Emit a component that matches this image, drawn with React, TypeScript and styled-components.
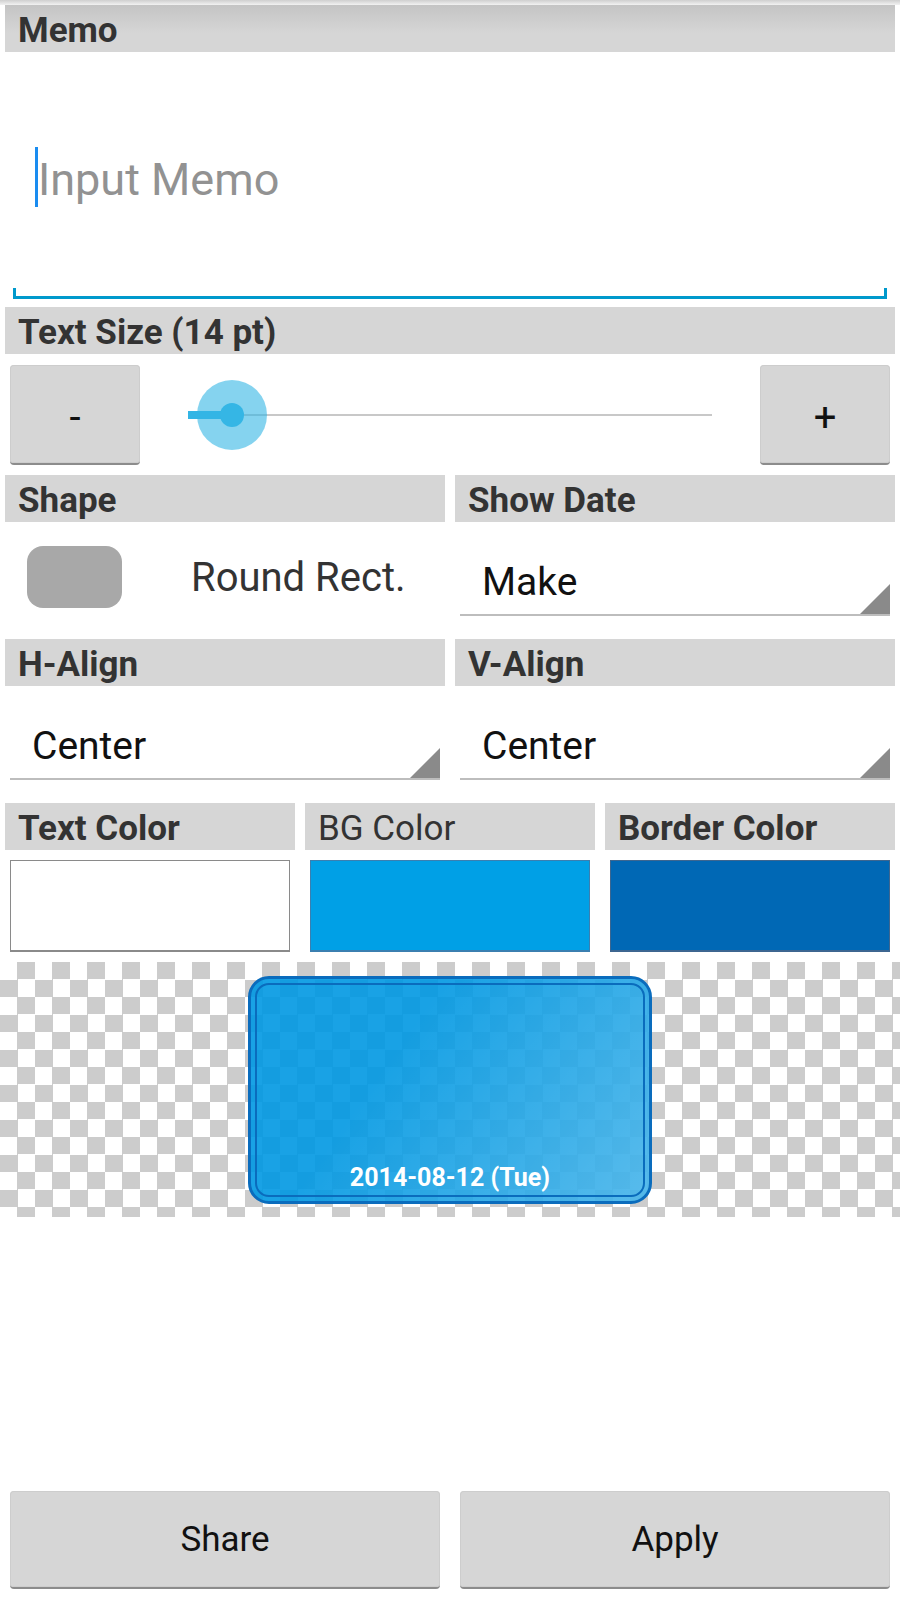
import React from "react";
import styled, { createGlobalStyle } from "styled-components";

const GlobalStyle = createGlobalStyle`
  html, body {
    margin: 0;
    padding: 0;
    background: #fff;
  }
  body {
    font-family: Roboto, "Noto Sans", "Liberation Sans", sans-serif;
  }
  * {
    box-sizing: border-box;
  }
`;

// Layout
const Page = styled.div`
  width: 900px;
  height: 1600px;
  display: flex;
  flex-direction: column;
  background: #fff;
  overflow: hidden;
`;

const TopShade = styled.div`
  height: 5px;
  background: linear-gradient(#cfcfcf, #f2f2f2);
`;

const SectionHeader = styled.div<{ light?: boolean; shaded?: boolean }>`
  height: 47px;
  padding: 9px 0 0 13px;
  background: ${({ shaded }) =>
    shaded ? "linear-gradient(#c4c4c4, #d6d6d6 60%)" : "#d6d6d6"};
  color: #333;
  font-size: 35px;
  line-height: 34px;
  font-weight: ${({ light }) => (light ? 400 : 700)};
  white-space: nowrap;
  overflow: hidden;
`;

const FullHeader = styled(SectionHeader)`
  margin: 0 5px;
`;

// Memo field
const MemoField = styled.div`
  margin: 0 13px 8px;
`;

const MemoText = styled.div`
  height: 236px;
  padding: 20px 0 0 22px;
  display: flex;
  align-items: center;
`;

const Caret = styled.span`
  width: 3px;
  height: 60px;
  margin-top: -6px;
  background: #1a8cf0;
`;

const Placeholder = styled.span`
  font-size: 45px;
  color: #929292;
  line-height: 60px;
`;

const Underline = styled.div`
  height: 11px;
  border: 3px solid #0099cc;
  border-top: none;
`;

// Text size row
const SizeRow = styled.div`
  display: flex;
  align-items: center;
  padding: 0 10px;
  margin: 11px 0 10px;
  height: 100px;
`;

const HoloButton = styled.button<{ w?: number; big?: boolean }>`
  width: ${({ w }) => (w ? `${w}px` : "auto")};
  flex: ${({ w }) => (w ? "none" : "1")};
  height: 100%;
  border: none;
  border-bottom: 2px solid #8c8c8c;
  border-radius: 4px;
  background: #d6d6d6;
  box-shadow: 0 0 0 1px #cdcdcd inset;
  color: #111;
  font-family: inherit;
  font-size: ${({ big }) => (big ? "40px" : "35px")};
  padding: ${({ big }) => (big ? "6px 0 0" : "0")};
  cursor: pointer;
`;

const SliderBox = styled.div`
  flex: 1;
  margin: 0 48px;
  height: 100%;
  position: relative;
  display: flex;
  align-items: center;
`;

const Track = styled.div`
  flex: 1;
  height: 2px;
  background: #c8c8c8;
  position: relative;
`;

const TrackFill = styled.div`
  position: absolute;
  left: 0;
  top: -3px;
  height: 8px;
  background: #33b5e5;
`;

const Thumb = styled.div`
  position: absolute;
  top: 50%;
  width: 70px;
  height: 70px;
  margin: -35px 0 0 -35px;
  border-radius: 50%;
  background: rgba(51, 181, 229, 0.6);
  display: flex;
  align-items: center;
  justify-content: center;

  &::after {
    content: "";
    width: 24px;
    height: 24px;
    border-radius: 50%;
    background: #35b6e5;
  }
`;

// Two / three column grids
const Columns = styled.div<{ count: number }>`
  display: grid;
  grid-template-columns: repeat(${({ count }) => count}, 1fr);
  column-gap: 10px;
  padding: 0 5px;
`;

const Cell = styled.div`
  display: flex;
  flex-direction: column;
`;

const ShapeBody = styled.div`
  height: 94px;
  margin-bottom: 23px;
  padding: 16px 0 0 22px;
  display: flex;
  align-items: center;
  gap: 69px;
`;

const ShapeSwatch = styled.div`
  width: 95px;
  height: 62px;
  border-radius: 16px;
  background: #a8a8a8;
`;

const ShapeLabel = styled.span`
  font-size: 40px;
  color: #333;
`;

const Spinner = styled.div`
  height: 94px;
  margin: 0 5px 23px;
  border-bottom: 2px solid #bdbdbd;
  display: flex;
`;

const SpinnerText = styled.span`
  flex: 1;
  padding: 37px 0 0 22px;
  font-size: 39px;
  line-height: 46px;
  color: #111;
`;

const SpinnerArrow = styled.div`
  align-self: flex-end;
  width: 0;
  height: 0;
  border-left: 30px solid transparent;
  border-bottom: 30px solid #8a8a8a;
`;

const ColorSwatch = styled.div<{ color: string; edge: string }>`
  height: 92px;
  margin: 10px 5px 0;
  background: ${({ color }) => color};
  border: 1px solid ${({ edge }) => edge};
  border-bottom-width: 2px;
`;

// Preview
const Checker = styled.div`
  margin-top: 10px;
  height: 255px;
  padding-top: 14px;
  display: flex;
  justify-content: center;
  align-items: flex-start;
  background-color: #fff;
  background-image: conic-gradient(#cccccc 25%, #ffffff 0 50%, #cccccc 0 75%, #ffffff 0);
  background-size: 35px 35px;
`;

const Memo = styled.div`
  width: 404px;
  height: 228px;
  padding: 4px;
  border: 3px solid #0a6cbd;
  border-radius: 21px;
  background: linear-gradient(
      125deg,
      rgba(255, 255, 255, 0) 35%,
      rgba(255, 255, 255, 0.28) 100%
    ),
    rgba(0, 152, 226, 0.9);
`;

const MemoInner = styled.div`
  height: 100%;
  border: 2px solid #0a6cbd;
  border-radius: 14px;
  display: flex;
  flex-direction: column;
  justify-content: flex-end;
  align-items: center;
  padding-bottom: 3px;
`;

const DateText = styled.span`
  color: #fff;
  font-size: 25px;
  font-weight: 700;
`;

// Footer
const Footer = styled.div`
  margin-top: auto;
  display: flex;
  gap: 20px;
  padding: 0 10px 11px;
  height: 109px;
`;

export default function App() {
  const sizePercent = 8.4;

  return (
    <>
      <GlobalStyle />
      <Page>
        <TopShade />
        <FullHeader shaded>Memo</FullHeader>
        <MemoField>
          <MemoText>
            <Caret />
            <Placeholder>Input Memo</Placeholder>
          </MemoText>
          <Underline />
        </MemoField>

        <FullHeader>Text Size (14 pt)</FullHeader>
        <SizeRow>
          <HoloButton w={130} big>-</HoloButton>
          <SliderBox>
            <Track>
              <TrackFill style={{ width: `${sizePercent}%` }} />
            </Track>
            <Thumb style={{ left: `${sizePercent}%` }} />
          </SliderBox>
          <HoloButton w={130} big>+</HoloButton>
        </SizeRow>

        <Columns count={2}>
          <Cell>
            <SectionHeader>Shape</SectionHeader>
            <ShapeBody>
              <ShapeSwatch />
              <ShapeLabel>Round Rect.</ShapeLabel>
            </ShapeBody>
          </Cell>
          <Cell>
            <SectionHeader>Show Date</SectionHeader>
            <Spinner>
              <SpinnerText>Make</SpinnerText>
              <SpinnerArrow />
            </Spinner>
          </Cell>
          <Cell>
            <SectionHeader>H-Align</SectionHeader>
            <Spinner>
              <SpinnerText>Center</SpinnerText>
              <SpinnerArrow />
            </Spinner>
          </Cell>
          <Cell>
            <SectionHeader>V-Align</SectionHeader>
            <Spinner>
              <SpinnerText>Center</SpinnerText>
              <SpinnerArrow />
            </Spinner>
          </Cell>
        </Columns>

        <Columns count={3}>
          <Cell>
            <SectionHeader>Text Color</SectionHeader>
            <ColorSwatch color="#ffffff" edge="#8a8a8a" />
          </Cell>
          <Cell>
            <SectionHeader light>BG Color</SectionHeader>
            <ColorSwatch color="#00a0e6" edge="#3b7fb0" />
          </Cell>
          <Cell>
            <SectionHeader>Border Color</SectionHeader>
            <ColorSwatch color="#0068b5" edge="#3d6690" />
          </Cell>
        </Columns>

        <Checker>
          <Memo>
            <MemoInner>
              <DateText>2014-08-12 (Tue)</DateText>
            </MemoInner>
          </Memo>
        </Checker>

        <Footer>
          <HoloButton>Share</HoloButton>
          <HoloButton>Apply</HoloButton>
        </Footer>
      </Page>
    </>
  );
}
